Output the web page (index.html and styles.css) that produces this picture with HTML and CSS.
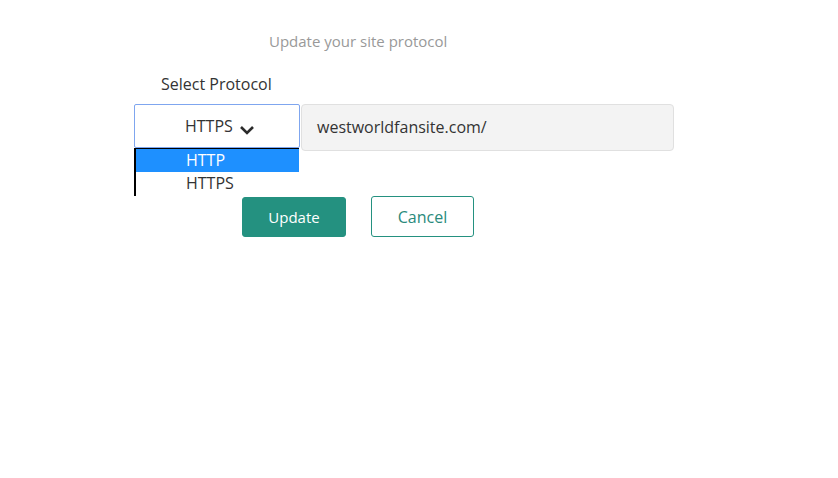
FILE: index.html
```html
<!DOCTYPE html>
<html>
<head>
<meta charset="utf-8">
<link rel="stylesheet" href="styles.css">
</head>
<body>
<div class="page">
  <p class="title">Update your site protocol</p>
  <p class="label">Select Protocol</p>
  <div class="row">
    <div class="select-wrap">
      <div class="select">
        <span class="select-value">HTTPS</span>
        <svg class="chev" width="16" height="10" viewBox="0 0 16 10"><path d="M2 2 L8 8 L14 2" fill="none" stroke="#2b2b2b" stroke-width="2.6"/></svg>
      </div>
      <ul class="dropdown">
        <li class="opt active">HTTP</li>
        <li class="opt">HTTPS</li>
      </ul>
    </div>
    <div class="url">westworldfansite.com/</div>
  </div>
  <div class="actions">
    <button class="btn btn-primary">Update</button>
    <button class="btn btn-outline">Cancel</button>
  </div>
</div>
</body>
</html>
```

FILE: styles.css
```css
* { box-sizing: border-box; }
body {
  margin: 0;
  background: #fff;
  font-family: "Open Sans", "Liberation Sans", sans-serif;
  color: #333;
}
.page {
  padding-top: 31px;
}
.title {
  margin: 0 0 0 269px;
  font-size: 15px;
  line-height: 20px;
  color: #999;
}
.label {
  margin: 22px 0 0 161px;
  font-size: 16px;
  line-height: 22px;
  color: #333;
}
.row {
  display: flex;
  margin: 9px 0 0 134px;
  align-items: flex-start;
}
.select-wrap {
  position: relative;
  width: 166px;
}
.select {
  height: 44px;
  border: 1px solid #7fa6ef;
  border-radius: 2px;
  display: flex;
  align-items: center;
  padding-left: 50px;
  background: #fff;
}
.select-value {
  font-size: 16px;
  color: #333;
}
.chev {
  margin-left: 6px;
  margin-top: 7px;
}
.dropdown {
  position: absolute;
  top: 44px;
  left: 0;
  width: 165px;
  margin: 0;
  padding: 0;
  list-style: none;
  border-top: 1px solid #000;
  border-left: 2px solid #000;
  height: 48px;
  background: #fff;
}
.opt {
  height: 23px;
  line-height: 23px;
  padding-left: 50px;
  font-size: 16px;
  color: #333;
}
.opt.active {
  background: #1e90ff;
  color: #fff;
}
.url {
  width: 373px;
  height: 47px;
  margin-left: 1px;
  background: #f3f3f3;
  border: 1px solid #e0e0e0;
  border-radius: 4px;
  font-size: 16px;
  line-height: 45px;
  padding-left: 15px;
  color: #333;
}
.actions {
  display: flex;
  gap: 25px;
  margin: 45px 0 0 242px;
  align-items: center;
}
.btn {
  font-family: "Open Sans", "Liberation Sans", sans-serif;
  font-size: 15px;
  border-radius: 3px;
  cursor: pointer;
  padding: 0;
}
.btn-primary {
  width: 104px;
  height: 40px;
  background: #249180;
  border: 1px solid #249180;
  color: #fff;
}
.btn-outline {
  width: 103px;
  height: 41px;
  background: #fff;
  border: 1px solid #249180;
  color: #2a8a7c;
  font-size: 16px;
  line-height: 38px;
}
```
